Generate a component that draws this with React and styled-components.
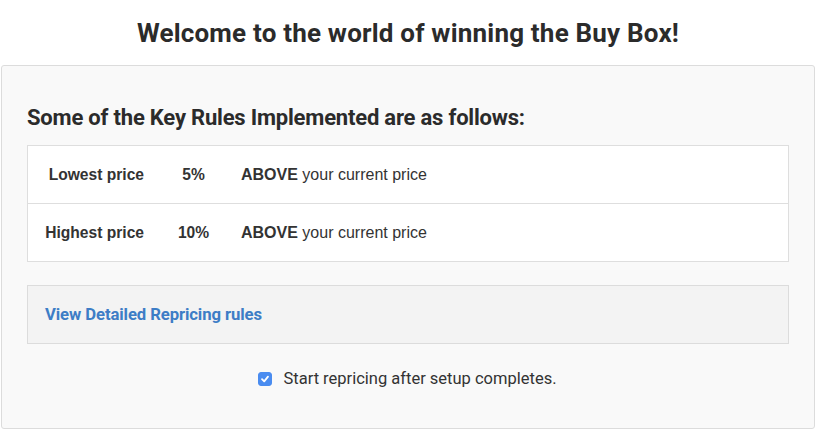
import React, { useState } from 'react';
import styled, { createGlobalStyle } from 'styled-components';

const GlobalStyle = createGlobalStyle`
  html, body {
    margin: 0;
    padding: 0;
    background: #fff;
  }
  body {
    font-family: Roboto, "Liberation Sans", Arial, sans-serif;
    color: #333;
  }
`;

const rules = [
  { label: 'Lowest price', pct: '5%' },
  { label: 'Highest price', pct: '10%' },
];

const Page = styled.div`
  width: 816px;
  height: 431px;
  box-sizing: border-box;
  padding: 0 1px 2px 1px;
  display: flex;
  flex-direction: column;
`;

const Title = styled.h1`
  margin: 0;
  height: 65px;
  display: flex;
  align-items: center;
  justify-content: center;
  font-size: 26px;
  font-weight: 700;
  letter-spacing: 0.2px;
  color: #2b2b2b;
  box-sizing: border-box;
`;

const Panel = styled.section`
  flex: 1;
  background: #f9f9f9;
  border: 1px solid #dcdcdc;
  border-radius: 3px;
  padding: 38px 25px 0 25px;
  display: flex;
  flex-direction: column;
`;

const SubTitle = styled.h2`
  margin: 0 0 13px 0;
  font-size: 22px;
  font-weight: 700;
  letter-spacing: -0.2px;
  color: #2b2b2b;
  line-height: 28px;
`;

const RuleTable = styled.div`
  background: #fff;
  border: 1px solid #dedede;
`;

const RuleRow = styled.div`
  display: grid;
  grid-template-columns: 132px 67px 1fr;
  height: 57px;
  align-items: center;
  font-family: "Liberation Sans", Arial, sans-serif;
  color: #333;
  border-top: ${p => (p.$first ? 'none' : '1px solid #dedede')};
`;

const Cell = styled.div`
  text-align: ${p => p.$align || 'center'};
  font-weight: ${p => (p.$bold ? 700 : 400)};
  font-size: ${p => p.$size || 15.6}px;
  padding-left: ${p => p.$padLeft || 0}px;
  padding-right: ${p => p.$padRight || 0}px;
`;

const LinkBox = styled.div`
  margin-top: 23px;
  height: 57px;
  background: #f3f3f3;
  border: 1px solid #dcdcdc;
  display: flex;
  align-items: center;
  padding-left: 17px;
`;

const DetailLink = styled.a`
  color: #3d7dc6;
  font-size: 16.7px;
  font-weight: 700;
  letter-spacing: -0.1px;
  text-decoration: none;
  cursor: pointer;
`;

const CheckRow = styled.label`
  margin-top: 25px;
  display: flex;
  align-items: center;
  justify-content: center;
  gap: 11px;
  font-size: 16.5px;
  color: #333;
  cursor: pointer;
  padding-right: 1px;
`;

const Box = styled.span`
  width: 14px;
  height: 14px;
  border-radius: 3px;
  background: ${p => (p.$on ? '#4a8cf0' : '#fff')};
  border: 1px solid ${p => (p.$on ? '#4a8cf0' : '#aaa')};
  box-sizing: border-box;
  display: inline-flex;
  align-items: center;
  justify-content: center;
`;

const HiddenInput = styled.input`
  display: none;
`;

export default function App() {
  const [checked, setChecked] = useState(true);

  return (
    <>
      <GlobalStyle />
      <Page>
        <Title>Welcome to the world of winning the Buy Box!</Title>
        <Panel>
          <SubTitle>Some of the Key Rules Implemented are as follows:</SubTitle>
          <RuleTable>
            {rules.map((r, i) => (
              <RuleRow key={r.label} $first={i === 0}>
                <Cell $bold $align="right" $padRight={16}>{r.label}</Cell>
                <Cell $bold>{r.pct}</Cell>
                <Cell $align="left" $padLeft={14} $size={16}>
                  <b>ABOVE</b> your current price
                </Cell>
              </RuleRow>
            ))}
          </RuleTable>
          <LinkBox>
            <DetailLink>View Detailed Repricing rules</DetailLink>
          </LinkBox>
          <CheckRow>
            <HiddenInput type="checkbox" checked={checked} onChange={e => setChecked(e.target.checked)} />
            <Box $on={checked}>
              {checked && (
                <svg width="10" height="10" viewBox="0 0 10 10">
                  <path d="M2 5.2 L4.2 7.4 L8 2.6" fill="none" stroke="#fff" strokeWidth="1.8" strokeLinecap="round" strokeLinejoin="round" />
                </svg>
              )}
            </Box>
            Start repricing after setup completes.
          </CheckRow>
        </Panel>
      </Page>
    </>
  );
}
